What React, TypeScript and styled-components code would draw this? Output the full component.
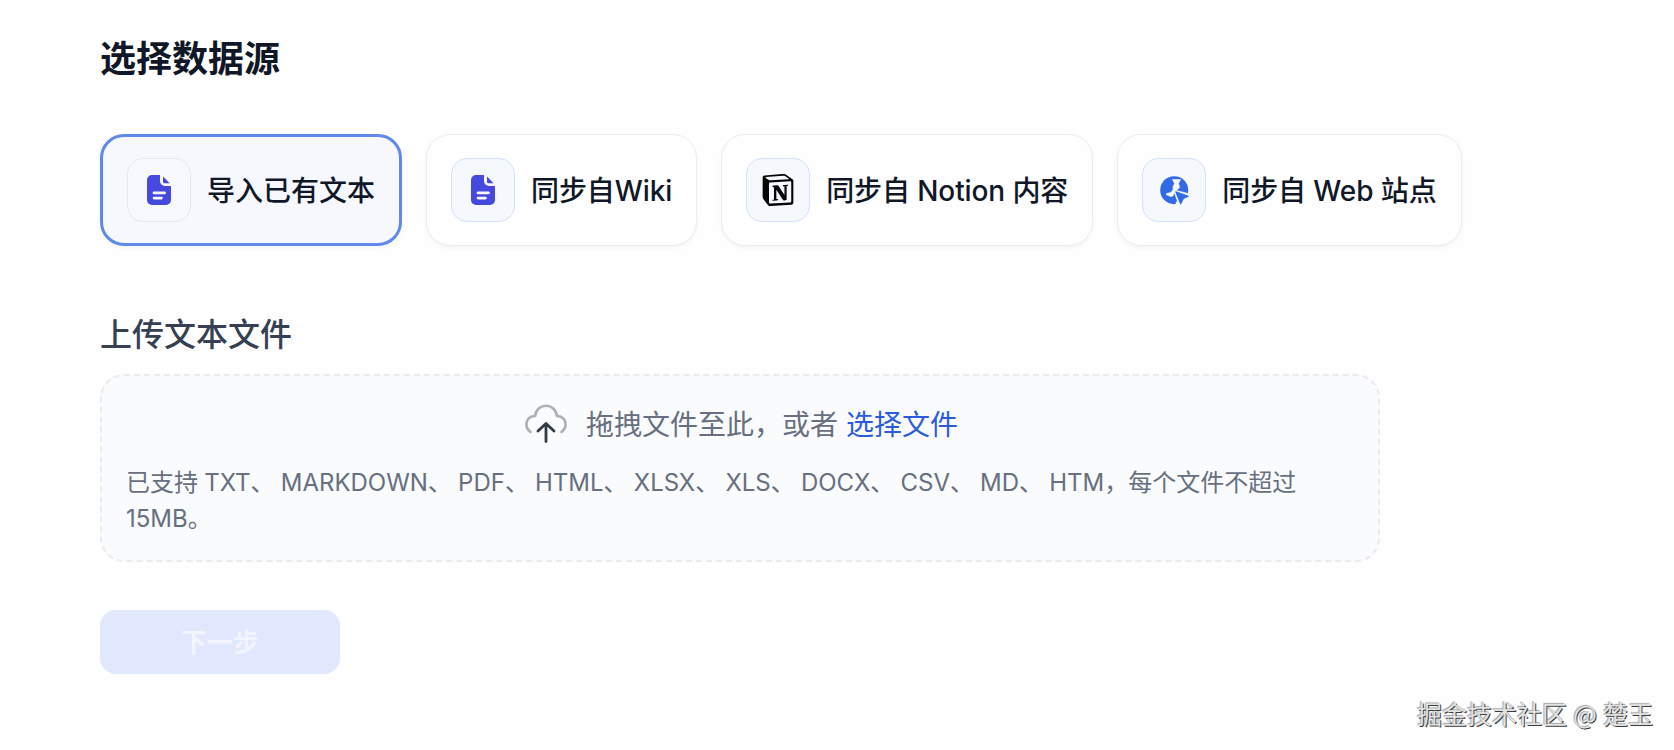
import styled, { createGlobalStyle } from "styled-components";
import { type FC, type ReactNode } from "react";

//type declarations.
interface DataSource {
  id: string;
  label: string;
  icon: ReactNode;
}

// =====================Global==================================>
const GlobalStyle = createGlobalStyle`
  * {
    box-sizing: border-box;
  }
  body {
    margin: 0;
    background: #fefefe;
    font-family: Inter, "Noto Sans CJK SC", sans-serif;
    color: #101828;
  }
`;

const StyledPage = styled.main`
  display: flex;
  flex-direction: column;
  align-items: flex-start;
  height: 750px;
  padding: 32px 21px 0 100px;
  overflow: hidden;
`;

const StyledTitle = styled.h1`
  margin: 0 0 48px;
  font-size: 36px;
  font-weight: 700;
  line-height: 54px;
`;

// =====================Source cards==================================>
const StyledSourceList = styled.div`
  display: flex;
  gap: 24px;
`;

const StyledSourceCard = styled.div<{ $active: boolean }>`
  display: flex;
  align-items: center;
  gap: 16px;
  height: 112px;
  padding: 0 24px;
  border: ${({ $active }) => ($active ? "3px solid #6189e9" : "1px solid #ececef")};
  border-radius: 24px;
  background: ${({ $active }) => ($active ? "#f6f8fe" : "#fefefe")};
  box-shadow: 0 2px 4px rgba(16, 24, 40, 0.04);
  font-size: 28px;
  font-weight: 500;
  line-height: 40px;
  letter-spacing: ${({ $active }) => ($active ? "0" : "-0.1px")};
  white-space: nowrap;

  span {
    padding-top: 2px;
  }
`;

const StyledIconBox = styled.div<{ $active: boolean }>`
  display: flex;
  align-items: center;
  justify-content: center;
  width: 64px;
  height: 64px;
  border: 1px solid ${({ $active }) => ($active ? "#e6e8f3" : "#d3e1fb")};
  border-radius: 16px;
  background: ${({ $active }) => ($active ? "#f8f9fe" : "#f5f9fe")};
`;

// =====================Upload==================================>
const StyledUploadTitle = styled.h2`
  margin: 65px 0 15px;
  color: #354052;
  font-size: 32px;
  font-weight: 500;
  line-height: 48px;
`;

const StyledDropZone = styled.div`
  width: 1280px;
  height: 188px;
  padding: 23px 24px 0;
  border: 2px dashed #e9ebee;
  border-radius: 24px;
  background: #f9fbfd;
  color: #676f80;
`;

const StyledDropLabel = styled.div`
  display: flex;
  align-items: center;
  justify-content: center;
  height: 48px;
  font-size: 28px;

  svg {
    margin-right: 16px;
  }
  label {
    margin-left: 8px;
    color: #2b5bdc;
  }
`;

const StyledTip = styled.p`
  margin: 18px 0 0;
  font-size: 24px;
  line-height: 36px;
  word-spacing: -0.6px;
`;

const StyledNextButton = styled.button`
  width: 240px;
  height: 64px;
  margin-top: 48px;
  padding: 0 0 3px;
  border: none;
  border-radius: 16px;
  background: #e1e7fd;
  color: #f2f5fe;
  font-family: inherit;
  font-size: 26px;
  font-weight: 600;
`;

const StyledWatermark = styled.footer`
  align-self: flex-end;
  margin-top: 21px;
  color: #e2e2e2;
  font-family: "Noto Sans CJK SC", sans-serif;
  font-size: 25px;
  line-height: 36px;
  word-spacing: 0.6px;
  text-shadow: 1px 1px 0 #3c3c3c, -1px -1px 1px #a6a6a6;
`;

// =====================Icons==================================>
const FileIcon: FC = () => (
  <svg width="24" height="30" viewBox="0 0 24 30" fill="#4549de">
    <path
      fillRule="evenodd"
      d="M5 0h8v6a5 5 0 0 0 5 5h6v14a5 5 0 0 1-5 5H5a5 5 0 0 1-5-5V5a5 5 0 0 1 5-5Zm2 16.500a1.400 1.400 0 0 0 0 2.800h10.500a1.400 1.400 0 0 0 0-2.800Zm0 5.300a1.300 1.300 0 0 0 0 2.600h7.500a1.300 1.300 0 0 0 0-2.600Z"
    />
    <path d="M16 1.6v5.2q0 1.5 1.500 1.500h5.200Z" />
  </svg>
);

const NotionIcon: FC = () => (
  <svg width="32" height="32" viewBox="0 0 24 24" fill="#050505">
    <path d="M4.459 4.208c.746.606 1.026.56 2.428.466l13.215-.793c.28 0 .047-.28-.046-.326L17.86 1.968c-.42-.326-.981-.7-2.055-.607L3.01 2.295c-.466.046-.56.28-.374.466zm.793 3.08v13.904c0 .747.373 1.027 1.214.98l14.523-.84c.841-.046.935-.56.935-1.167V6.354c0-.606-.233-.933-.748-.887l-15.177.887c-.56.047-.747.327-.747.933zm14.337.745c.093.42 0 .84-.42.888l-.7.14v10.264c-.608.327-1.168.514-1.635.514-.748 0-.935-.234-1.495-.933l-4.577-7.186v6.952L12.21 19s0 .84-1.168.84l-3.222.186c-.093-.186 0-.653.327-.746l.84-.233V9.854L7.822 9.76c-.094-.42.14-1.026.793-1.073l3.456-.233 4.764 7.279v-6.44l-1.215-.139c-.093-.514.28-.887.747-.933zM1.936 1.035l13.31-.98c1.634-.14 2.055-.047 3.082.7l4.249 2.986c.7.513.934.653.934 1.213v16.378c0 1.026-.373 1.634-1.68 1.726l-15.458.934c-.98.047-1.448-.093-1.962-.747l-3.129-4.06c-.56-.747-.793-1.306-.793-1.96V2.667c0-.839.374-1.54 1.447-1.632z" />
  </svg>
);

const WebIcon: FC = () => (
  <svg width="29" height="29" viewBox="0 0 29 29">
    <circle cx="14.2" cy="14.2" r="14" fill="#316ae6" />
    <path
      d="M12.500 3.500H20.500L18.500 7.500L19.500 11C19.500 13 16.800 12.800 16.500 14.500L29 17.800V29H16V26.300L17.500 25.500L14.300 16.500L13 20L10.500 20.500L6.500 18.800V17.500L11 16.500L13 13.500V10.500L14.500 7.500Z"
      fill="#f5f9fe"
      stroke="#f5f9fe"
      strokeWidth="0.6"
      strokeLinejoin="round"
    />
    <path
      d="M15.800 15.800L28.200 20.200L23.300 22.500L20.700 27.800Z"
      fill="#316ae6"
      stroke="#316ae6"
      strokeWidth="1.2"
      strokeLinejoin="round"
    />
  </svg>
);

const UploadIcon: FC = () => (
  <svg
    width="48"
    height="48"
    viewBox="0 0 48 48"
    fill="none"
    strokeWidth="2.7"
    strokeLinecap="round"
    strokeLinejoin="round"
  >
    <path
      d="M8.500 33C1.800 28 3.500 17.500 13 17C15 3.300 33 3.300 35 17C44.500 17.500 46.200 28 39.500 33"
      stroke="#adb1b5"
    />
    <path d="M24 42.500V25M16 32L24 24.500L32 32" stroke="#333b47" strokeWidth="2.8" />
  </svg>
);

// ================================================================>
const sources: DataSource[] = [
  { id: "file", label: "导入已有文本", icon: <FileIcon /> },
  { id: "wiki", label: "同步自Wiki", icon: <FileIcon /> },
  { id: "notion", label: "同步自 Notion 内容", icon: <NotionIcon /> },
  { id: "web", label: "同步自 Web 站点", icon: <WebIcon /> },
];

//Data source step.
const App: FC = () => {
  return (
    <>
      <GlobalStyle />
      <StyledPage>
        <StyledTitle>选择数据源</StyledTitle>
        <StyledSourceList>
          {sources.map(({ id, label, icon }) => (
            <StyledSourceCard key={id} $active={id === "file"}>
              <StyledIconBox $active={id === "file"}>{icon}</StyledIconBox>
              <span>{label}</span>
            </StyledSourceCard>
          ))}
        </StyledSourceList>
        <StyledUploadTitle>上传文本文件</StyledUploadTitle>
        <StyledDropZone>
          <StyledDropLabel>
            <UploadIcon />
            <span>拖拽文件至此，或者</span>
            <label>选择文件</label>
          </StyledDropLabel>
          <StyledTip>
            已支持 TXT、 MARKDOWN、 PDF、 HTML、 XLSX、 XLS、 DOCX、 CSV、 MD、
            HTM，每个文件不超过 15MB。
          </StyledTip>
        </StyledDropZone>
        <StyledNextButton disabled>下一步</StyledNextButton>
        <StyledWatermark>掘金技术社区 @ 楚玉</StyledWatermark>
      </StyledPage>
    </>
  );
};

export default App;
